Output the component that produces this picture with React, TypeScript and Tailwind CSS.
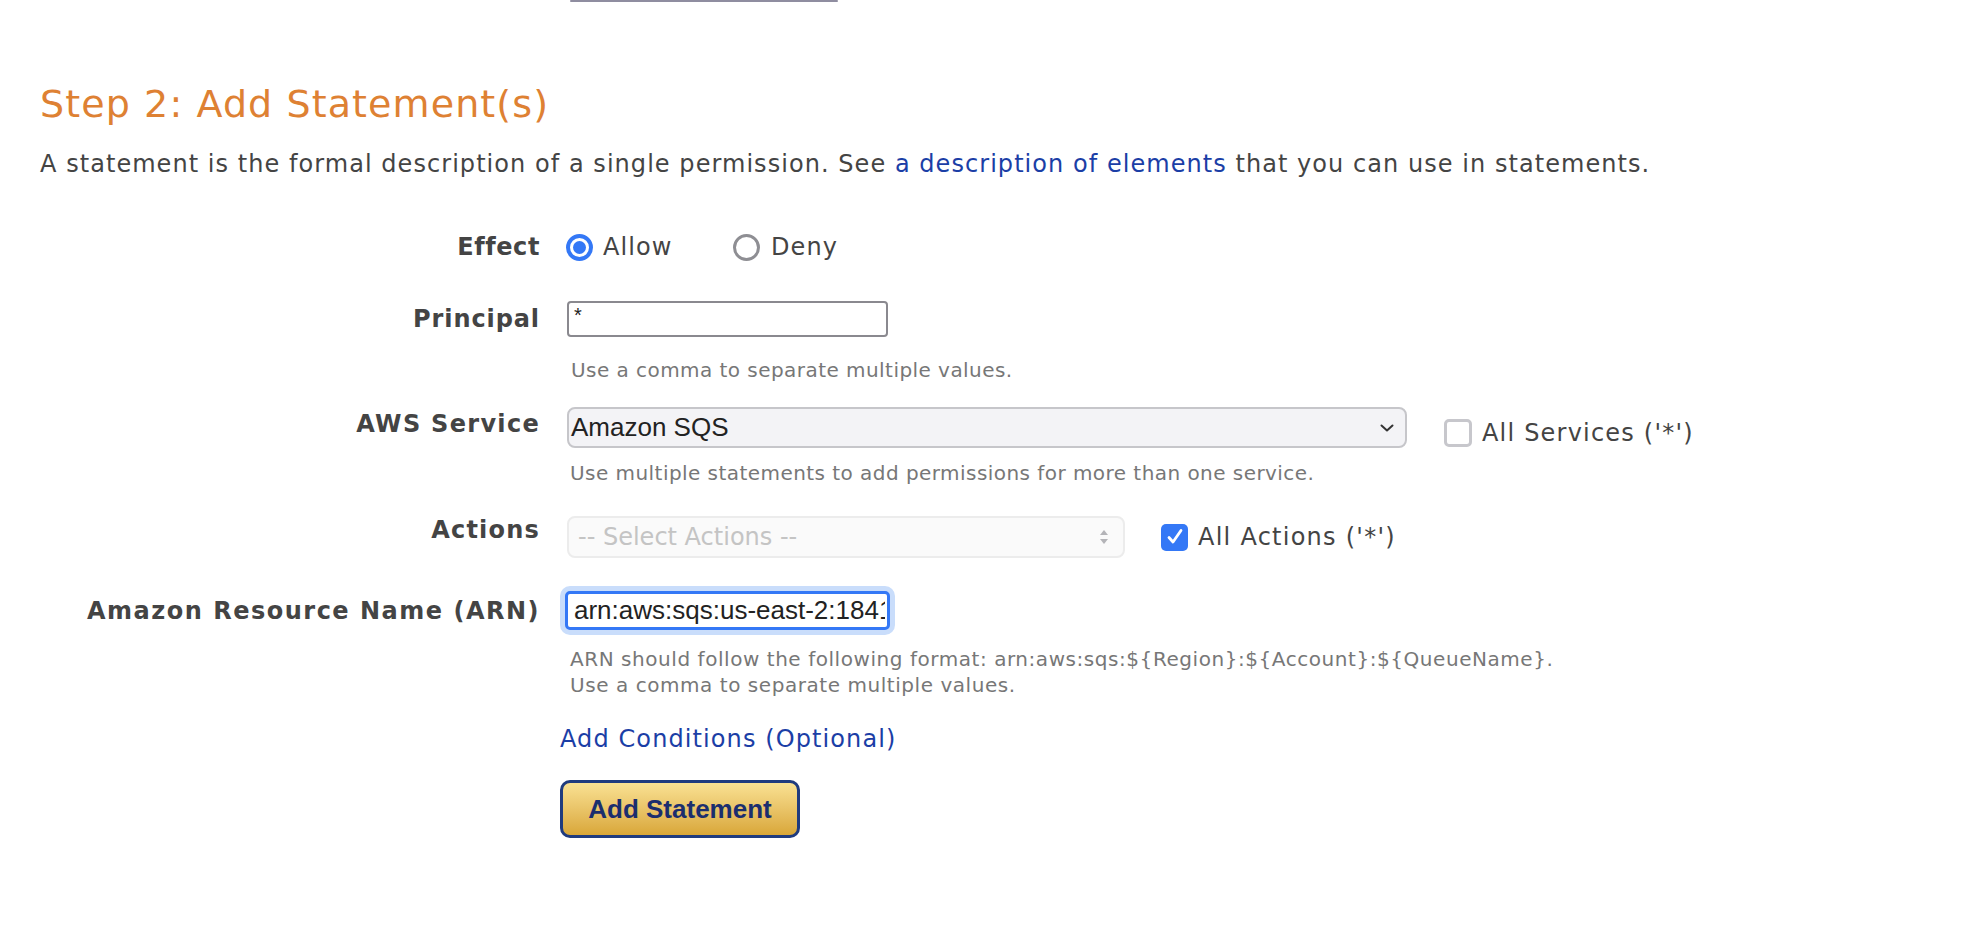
import React from "react";

function Radio({ checked }: { checked: boolean }) {
  return checked ? (
    <span className="flex h-[27px] w-[27px] items-center justify-center rounded-full border-[4px] border-[#3478f6] bg-white">
      <span className="h-[13px] w-[13px] rounded-full bg-[#3478f6]" />
    </span>
  ) : (
    <span className="h-[27px] w-[27px] rounded-full border-[3.5px] border-[#8e8e93] bg-white" />
  );
}

function Checkbox({ checked }: { checked: boolean }) {
  return checked ? (
    <span className="flex h-[27px] w-[27px] items-center justify-center rounded-[5px] bg-[#3478f6]">
      <svg width="20" height="20" viewBox="0 0 20 20" fill="none">
        <path d="M4 10.5 L8 15 L16 3.5" stroke="white" strokeWidth="2.8" strokeLinecap="round" strokeLinejoin="round" />
      </svg>
    </span>
  ) : (
    <span className="h-[28px] w-[28px] rounded-[5px] border-[3px] border-[#c7c7cc] bg-white" />
  );
}

export default function App() {
  return (
    <div className="min-h-screen bg-white font-['DejaVu_Sans',Verdana,sans-serif] text-[#444]">
      <div className="ml-[570px] h-[2px] w-[268px] rounded-full bg-[#8f8da0]" />

      <h2 className="mt-[79px] pl-[40px] text-[38px] leading-[46px] font-normal tracking-[1.1px] text-[#de8133]">
        Step 2: Add Statement(s)
      </h2>

      <p className="mt-[22px] pl-[40px] text-[24px] leading-[30px] tracking-[1.05px] text-[#444]">
        A statement is the formal description of a single permission. See{" "}
        <a className="text-[#1b3ea6]">a description of elements</a> that you can use in statements.
      </p>

      <div className="pl-[40px]">
        {/* Effect */}
        <div className="mt-[53px] flex h-[30px] items-center">
          <div className="w-[500px] text-right text-[24px] leading-[30px] font-bold tracking-[0.6px]">Effect</div>
          <div className="ml-[26px] flex items-center">
            <div className="flex w-[167px] items-center">
              <Radio checked />
              <span className="ml-[10px] text-[24px] leading-[30px] tracking-[1.1px]">Allow</span>
            </div>
            <div className="flex items-center">
              <Radio checked={false} />
              <span className="ml-[11px] text-[24px] leading-[30px] tracking-[1.1px]">Deny</span>
            </div>
          </div>
        </div>

        {/* Principal */}
        <div className="mt-[39px] flex h-[36px] items-center">
          <div className="w-[500px] text-right text-[24px] leading-[30px] font-bold tracking-[0.9px]">Principal</div>
          <div className="ml-[27px]">
            <input
              readOnly
              value="*"
              className="block h-[36px] w-[321px] rounded-[4px] border-2 border-[#8a898f] bg-white px-[5px] pb-[8px] font-['Liberation_Sans',Arial,sans-serif] text-[20px] text-[#222] outline-none"
            />
          </div>
        </div>

        <p className="mt-[20px] pl-[531px] text-[20px] leading-[26px] tracking-[0.45px] text-[#777]">
          Use a comma to separate multiple values.
        </p>

        {/* AWS Service */}
        <div className="mt-[24px] flex items-start">
          <div className="mt-[2px] w-[500px] text-right text-[24px] leading-[30px] font-bold tracking-[1.3px]">AWS Service</div>
          <div className="ml-[27px] flex items-start">
            <div className="flex h-[41px] w-[840px] items-center justify-between rounded-[8px] border-2 border-[#c6c6ca] bg-[#f3f3f6] pl-[2px] pr-[11px] font-['Liberation_Sans',Arial,sans-serif] text-[26px] text-[#222]">
              <span>Amazon SQS</span>
              <svg width="14" height="8" viewBox="0 0 14 8" fill="none">
                <path d="M1.5 1.5 L7 6.5 L12.5 1.5" stroke="#333" strokeWidth="2" strokeLinecap="round" strokeLinejoin="round" />
              </svg>
            </div>
            <div className="ml-[37px] mt-[11px] flex h-[30px] items-center">
              <Checkbox checked={false} />
              <span className="ml-[10px] text-[24px] leading-[30px] tracking-[1.2px]">All Services ('*')</span>
            </div>
          </div>
        </div>

        <p className="mt-[12px] pl-[530px] text-[20px] leading-[26px] tracking-[0.45px] text-[#777]">
          Use multiple statements to add permissions for more than one service.
        </p>

        {/* Actions */}
        <div className="mt-[29px] flex items-center">
          <div className="mb-[14px] w-[500px] self-start text-right text-[24px] leading-[30px] font-bold tracking-[1.2px]">Actions</div>
          <div className="ml-[27px] flex items-center">
            <div className="flex h-[42px] w-[558px] items-center justify-between rounded-[8px] border-2 border-[#ececec] bg-[#fafafa] pl-[9px] pr-[14px] text-[24px] text-[#c4c4c4]">
              <span>-- Select Actions --</span>
              <svg width="10" height="16" viewBox="0 0 10 16" fill="#b4b4b8">
                <path d="M5 1 L9 6 L1 6 Z" />
                <path d="M5 15 L9 10 L1 10 Z" />
              </svg>
            </div>
            <div className="ml-[36px] flex h-[30px] items-center">
              <Checkbox checked />
              <span className="ml-[10px] text-[24px] leading-[30px] tracking-[1.25px]">All Actions ('*')</span>
            </div>
          </div>
        </div>

        {/* ARN */}
        <div className="mt-[32px] flex items-center">
          <div className="w-[500px] text-right text-[24px] leading-[30px] font-bold tracking-[1.5px]">Amazon Resource Name (ARN)</div>
          <div className="ml-[25px]">
            <input
              readOnly
              value="arn:aws:sqs:us-east-2:184123456789:MyQueue"
              className="block h-[39px] w-[325px] rounded-[5px] border-[3px] border-[#3478f6] bg-white pl-[6px] pr-[2px] font-['Liberation_Sans',Arial,sans-serif] text-[26px] text-[#222] shadow-[0_0_0_5px_#c9ddfb] outline-none"
            />
          </div>
        </div>

        <p className="mt-[16px] pl-[530px] text-[20px] leading-[26px] tracking-[0.55px] text-[#777]">
          ARN should follow the following format: arn:aws:sqs:${"{"}Region{"}"}:${"{"}Account{"}"}:${"{"}QueueName{"}"}.
          <br />
          Use a comma to separate multiple values.
        </p>

        <a className="mt-[26px] block pl-[520px] text-[24px] leading-[30px] tracking-[1.1px] text-[#1b3ea6]">Add Conditions (Optional)</a>

        <div className="ml-[520px] mt-[26px] mb-[80px]">
          <button className="flex h-[58px] w-[240px] items-center justify-center rounded-[10px] border-[3px] border-[#1f3b7e] bg-gradient-to-b from-[#f9e192] to-[#d9a737] font-['Liberation_Sans',Arial,sans-serif] text-[26px] font-bold text-[#1b2e6e]">
            Add Statement
          </button>
        </div>
      </div>
    </div>
  );
}
